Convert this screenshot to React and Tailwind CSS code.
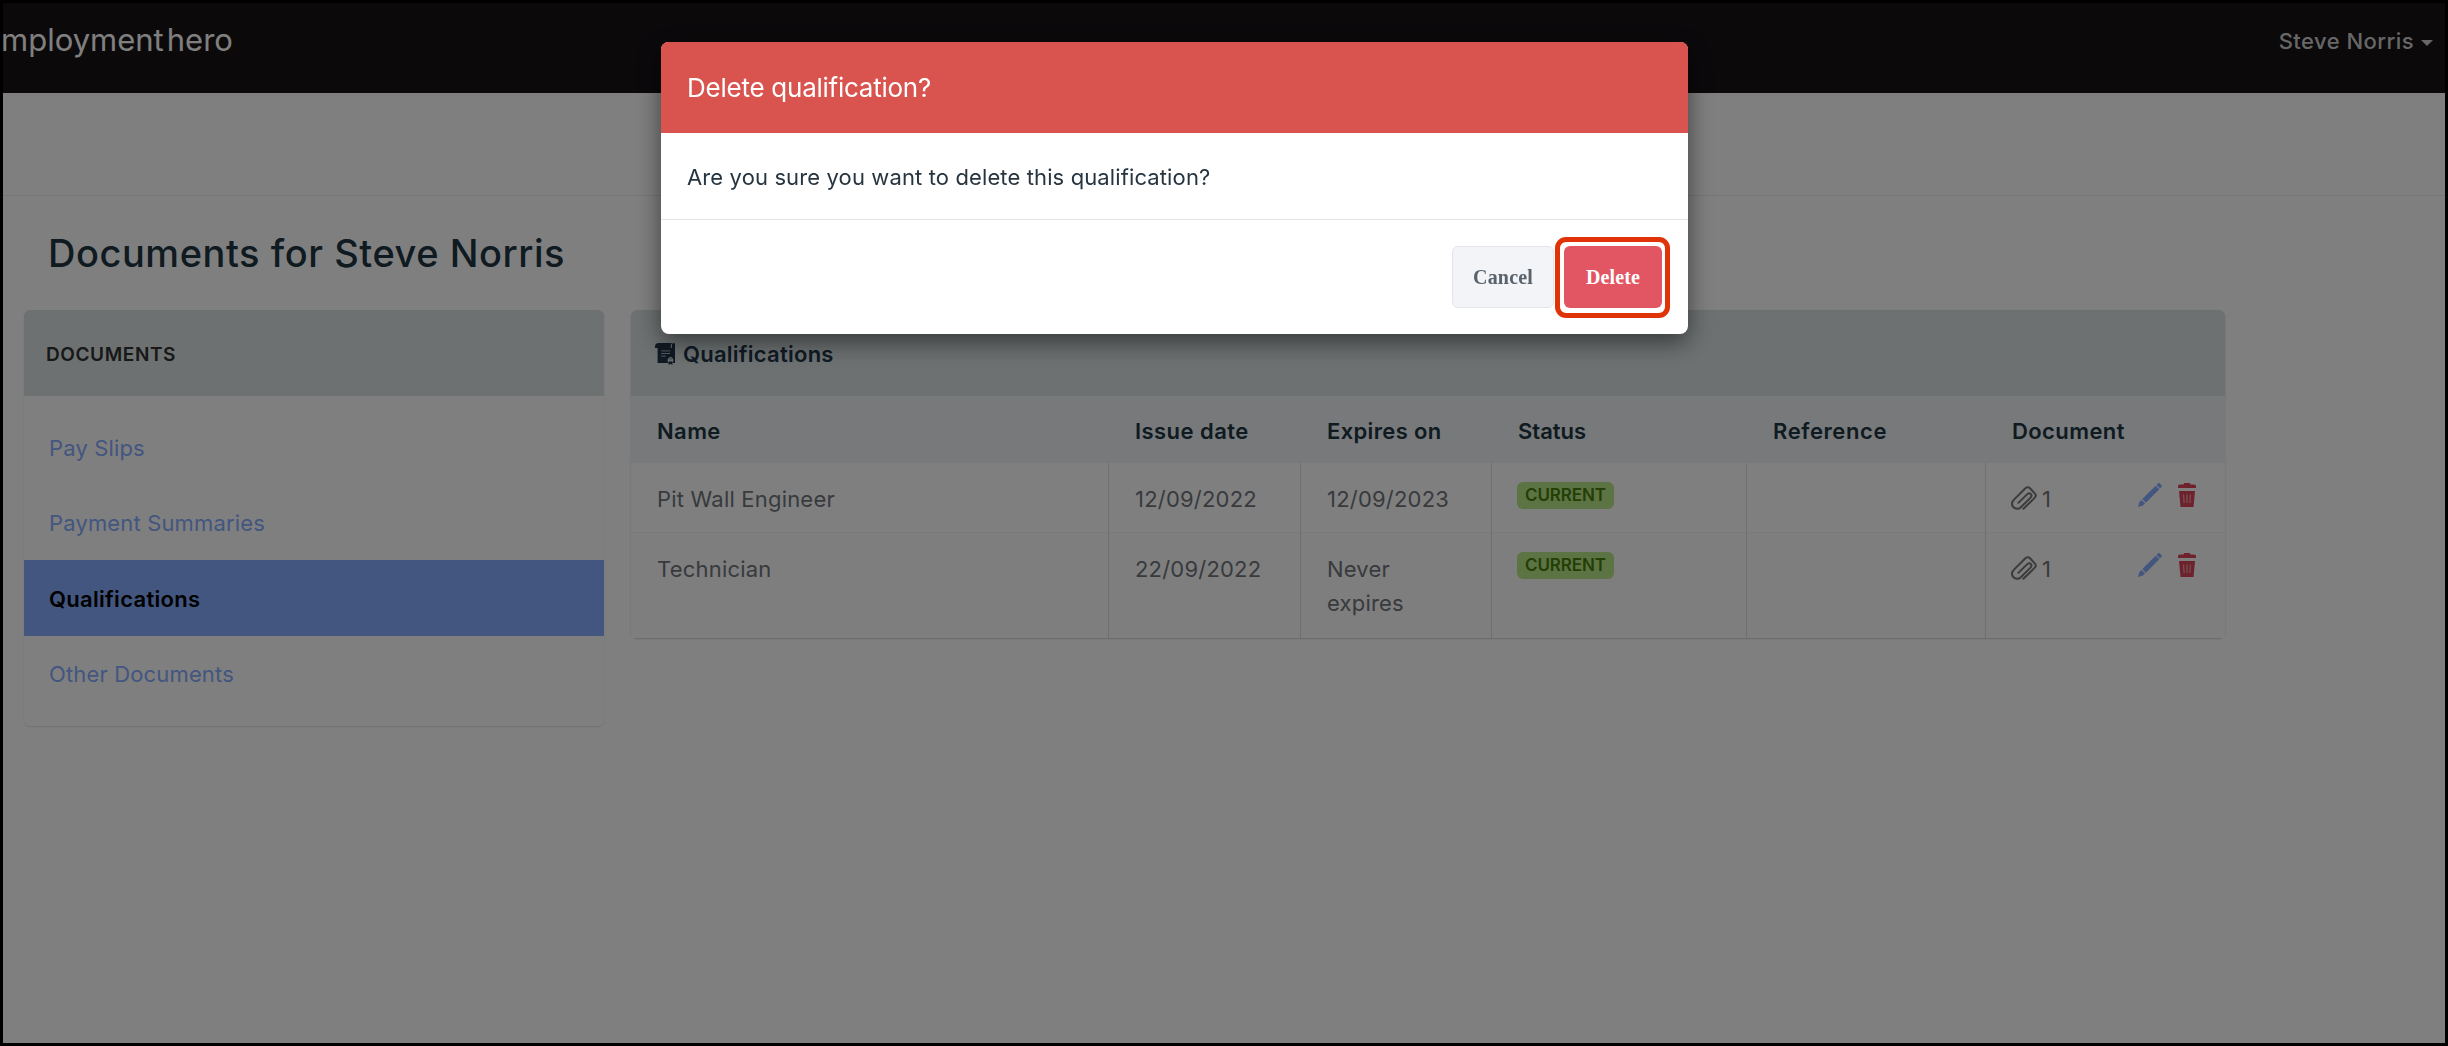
import React from "react";

function QualificationIcon() {
  return (
    <svg viewBox="0 0 20 22" className="h-[22px] w-5 shrink-0" fill="#203448">
      <path d="M4 0h13.600c-1.200.4-1.800 1.400-1.800 2.600V5H0V3.400C0 1.200 1.500 0 4 0z" />
      <path d="M16.800 3c0-1.900.8-3 1.900-3 .8 0 1.300.5 1.300 1.500V20h-2.400v-1a2.800 2.800 0 1 0-4.200 0v1H2.600V5h14.200z" />
      <path d="M6.200 7.900h9M6.200 10.500h9M6.200 13.100h4.600" stroke="#a9b4b9" strokeWidth="1" fill="none" />
      <circle cx="15.500" cy="15.700" r="1.900" fill="#a9b4b9" />
      <path d="M13.600 18.600h3.800V22l-1.900-1.200-1.900 1.200z" />
    </svg>
  );
}

function ClipIcon() {
  return (
    <svg viewBox="0 0 26 25" className="mt-px h-[25px] w-[26px] shrink-0" fill="none" stroke="#777777" strokeWidth="2" strokeLinecap="round" strokeLinejoin="round">
      <path d="M12.400 22.800 23.600 11.900c1.500-1.500 1.500-3.200.2-4.500l-4.600-4.900c-1.600-1.600-3.600-1.500-5.300.2L3.200 13.400c-2.500 2.500-2.800 5.400-.9 7.600 1.900 2.200 5.200 2.600 7.500.3l9.500-9.400c1.400-1.400 1.500-2.900.5-3.900s-2.500-.8-3.800.4L7.400 16.900" />
    </svg>
  );
}

function PencilIcon() {
  return (
    <svg viewBox="0 0 24 24" className="h-6 w-6" fill="#86acfe">
      <path d="M18.500 2.100 20.300.3c.4-.4.900-.4 1.300 0l2.100 2.100c.4.4.4.9 0 1.300l-1.800 1.800z" />
      <path d="M17.700 2.700 21.300 6.300 7.900 19.700 4.300 16.100z" />
      <path d="M3.500 16.900 7.100 20.500 5 22.600 0 24l1.400-5z" />
    </svg>
  );
}

function TrashIcon() {
  return (
    <svg viewBox="0 0 18 24" className="h-6 w-[18px]" fill="#dd4459">
      <path d="M5.600 1.400C5.700.5 6.200 0 7 0h4c.8 0 1.300.5 1.400 1.400H16c1.300 0 2 .7 2 1.800V5H0V3.200c0-1.100.7-1.800 2-1.800z" />
      <path d="M1 8h16l-1.500 16h-13z" />
      <path d="m5.500 11.500.6 8.500M9 11.500V20M12.500 11.500l-.6 8.500" stroke="#e9a7ae" strokeWidth="1.200" fill="none" />
    </svg>
  );
}

const navItems = ["Pay Slips", "Payment Summaries", "Qualifications", "Other Documents"];

const headers = [
  ["Name", "tracking-[0.4px]"],
  ["Issue date", "tracking-[0.45px]"],
  ["Expires on", "tracking-[0.35px]"],
  ["Status", "tracking-[0px]"],
  ["Reference", "tracking-[0.6px]"],
  ["Document", "tracking-[0.4px]"],
];

const rows = [
  { name: "Pit Wall Engineer", issued: "12/09/2022", expires: "12/09/2023" },
  { name: "Technician", issued: "22/09/2022", expires: "Never expires" },
];

const columns = "grid grid-cols-[478px_192px_191px_255px_239px_239px]";
const cell = "border-r border-[#dcdede] pt-[19px] pb-[17px] pl-[26px]";

function Row({ row, last }) {
  return (
    <div
      className={
        columns +
        " text-[22px] leading-[34px] tracking-[0.2px] text-[#70757a] " +
        (last ? "h-[105px] bg-[#fcfcfc]" : "h-[70px] border-b border-[#f4f5f6]")
      }
    >
      <div className={cell}>{row.name}</div>
      <div className={cell}>{row.issued}</div>
      <div className={cell + " pr-10"}>{row.expires}</div>
      <div className={cell}>
        <div className="-ml-px flex h-[27px] w-[97px] items-center justify-center rounded-[6px] bg-[#b8e986] text-[17px] leading-none font-semibold tracking-[-0.1px] text-[#4a7d0d]">
          CURRENT
        </div>
      </div>
      <div className={cell} />
      <div className="flex items-start pt-[19px] pr-[29px] pl-[25px]">
        <div className="flex gap-1.5 pt-[3px] text-[#777777]">
          <ClipIcon />
          <span className="-mt-[3px] -ml-px">1</span>
        </div>
        <div className="ml-auto flex gap-4 pt-px">
          <PencilIcon />
          <TrashIcon />
        </div>
      </div>
    </div>
  );
}

export default function App() {
  return (
    <div className="relative h-[1046px] w-[2448px] overflow-hidden border-[3px] border-black bg-white font-['Inter',sans-serif]">
      <header className="flex h-[90px] justify-between bg-[#161215] text-white">
        <div className="-ml-[2px] flex pt-[15px] text-[31px] leading-[44px] text-white">
          <span>mployment</span>
          <span className="ml-[3px]">hero</span>
        </div>
        <div className="flex h-[76px] items-center gap-[7px] pr-3 text-[22px] font-medium tracking-[0.45px] text-[#cfcfcf]">
          <span>Steve Norris</span>
          <span className="mt-1 border-x-[6px] border-t-[6px] border-x-transparent border-t-[#cfcfcf]" />
        </div>
      </header>
      <div className="h-[103px] border-b border-[#ececec]" />
      <h1 className="mt-[32px] pl-[45px] text-[38px] leading-[50px] font-medium tracking-[0.55px] text-[#203642]">
        Documents for Steve Norris
      </h1>
      <div className="mt-[32px] flex items-start gap-[27px] pl-[21px]">
        <aside className="h-[416px] w-[580px] rounded-[6px] shadow-[0_1px_2px_rgba(0,0,0,0.12)]">
          <div className="flex h-[86px] items-center rounded-t-[6px] bg-[#dae2e2] pt-[4px] pl-[22px] text-[19px] font-semibold tracking-[0.6px] text-[#303030]">
            DOCUMENTS
          </div>
          <nav className="pt-[13px]">
            {navItems.map((item) => (
              <div
                key={item}
                className={
                  "flex h-[75.5px] items-center pl-[25px] pt-[3px] text-[22px] " +
                  (item === "Qualifications"
                    ? "bg-[#86acfe] font-semibold tracking-[0.3px] text-black"
                    : "tracking-[0.15px] text-[#86acfe]")
                }
              >
                {item}
              </div>
            ))}
          </nav>
        </aside>
        <main className="w-[1594px] rounded-[6px] shadow-[0_1px_2px_rgba(0,0,0,0.2)]">
          <div className="flex h-[86px] items-center gap-2 rounded-t-[6px] bg-[#dae2e2] pt-[2px] pl-6 text-[22px] font-semibold tracking-[0.25px] text-[#203448]">
            <QualificationIcon />
            Qualifications
          </div>
          <div className={columns + " h-[67px] items-center bg-[#eef2f6] pt-[4px] text-[22px] font-semibold text-[#203642]"}>
            {headers.map(([label, tracking]) => (
              <div key={label} className={"pl-[26px] " + tracking}>
                {label}
              </div>
            ))}
          </div>
          {rows.map((row, i) => (
            <Row key={row.name} row={row} last={i === rows.length - 1} />
          ))}
        </main>
      </div>

      <div className="fixed inset-0 flex items-start bg-black/50 pt-[42px] pl-[661px]">
        <section className="h-[292px] w-[1027px] rounded-[8px] bg-white shadow-[0_8px_24px_rgba(0,0,0,0.5)]">
          <div className="flex h-[91px] items-center rounded-t-[7px] bg-[#d9534f] pl-[26px] text-[26px] tracking-[-0.25px] text-white">
            Delete qualification?
          </div>
          <div className="flex h-[87px] items-center border-b border-[#e2e5e7] pl-[26px] pt-[2px] text-[22px] tracking-[0.12px] text-[#263540]">
            Are you sure you want to delete this qualification?
          </div>
          <div className="flex justify-end gap-[10px] pt-[26px] pr-[26px] font-['Liberation_Serif',serif] text-[20px] font-bold tracking-[0.15px]">
            <button className="h-[62px] w-[102px] rounded-[6px] border border-[#e2e5e9] bg-[#f3f4f7] text-[#59636d]">Cancel</button>
            <div className="relative h-[62px] w-[98px]">
              <div className="absolute -top-[9px] -right-2 -bottom-[10px] -left-[9px] rounded-[11px] border-[5px] border-[#e03408] bg-white" />
              <button className="relative h-full w-full rounded-[6px] bg-[#e25563] text-white">Delete</button>
            </div>
          </div>
        </section>
      </div>
    </div>
  );
}
